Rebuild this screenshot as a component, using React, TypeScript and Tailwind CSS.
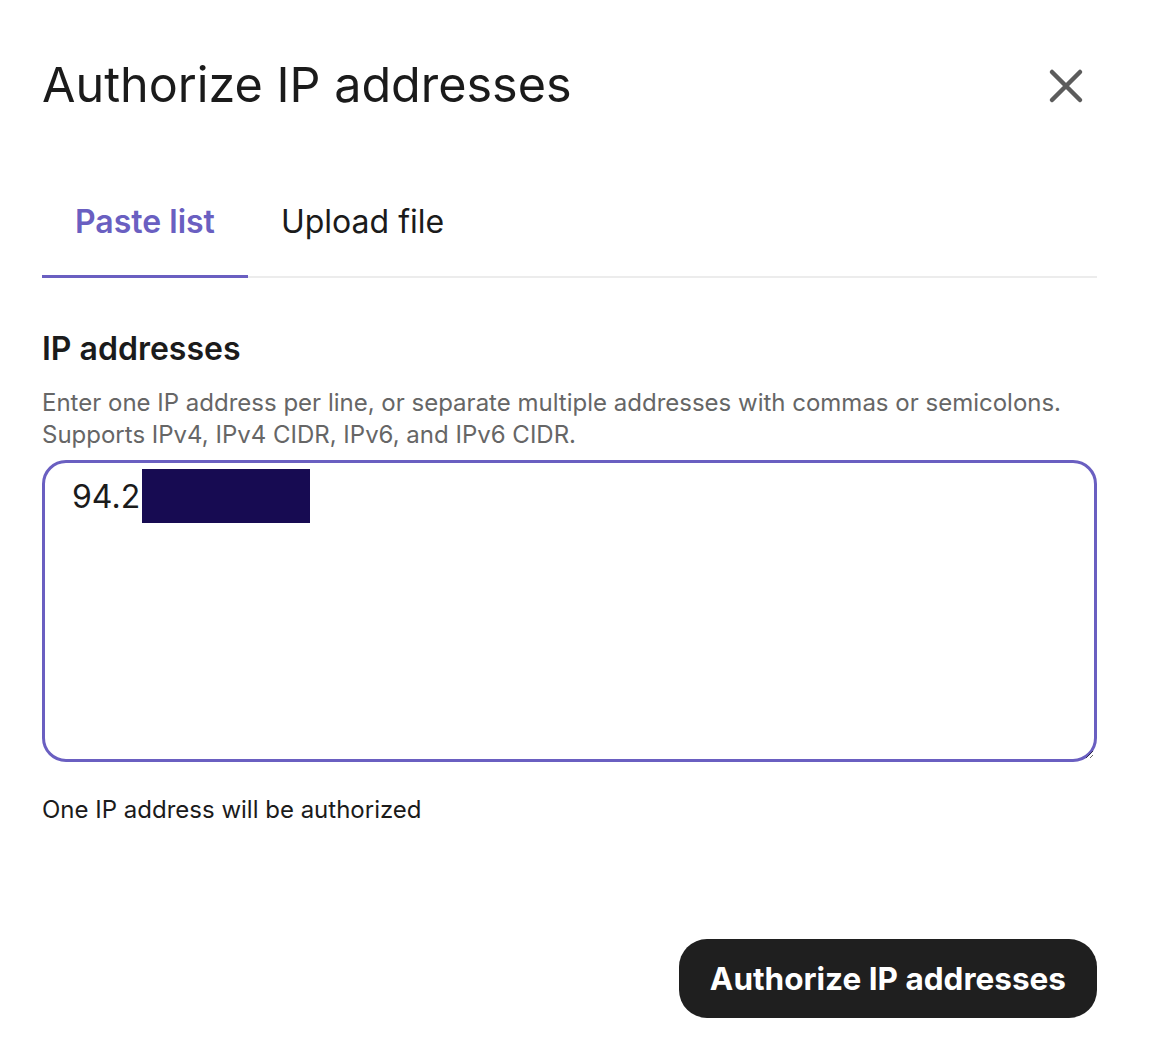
import { useState } from 'react';

type Tab = 'paste' | 'upload';

const TABS: { key: Tab; label: string }[] = [
  { key: 'paste', label: 'Paste list' },
  { key: 'upload', label: 'Upload file' },
];

function CloseIcon() {
  return (
    <svg width="36" height="36" viewBox="0 0 36 36" fill="none" aria-hidden>
      <path d="M4 4 L32 32 M32 4 L4 32" stroke="#5c5c5c" strokeWidth="4.5" strokeLinecap="round" />
    </svg>
  );
}

export default function App() {
  const [tab, setTab] = useState<Tab>('paste');
  const [value, setValue] = useState('94.2');

  return (
    <div
      className="min-h-screen bg-white pl-[42px] pr-[58px] pt-[61px] text-[#1b1b1b]"
      style={{ fontFamily: 'Inter, "Noto Sans", sans-serif' }}
    >
      <header className="flex items-start justify-between">
        <h1 className="text-[48.5px] font-normal leading-[48px]">Authorize IP addresses</h1>
        <button className="mr-[13px] mt-[7px]" aria-label="Close">
          <CloseIcon />
        </button>
      </header>

      <nav className="mt-[94px] flex border-b-2 border-[#ececec]">
        {TABS.map((t) => (
          <button
            key={t.key}
            onClick={() => setTab(t.key)}
            className={`-mb-[2px] border-b-[3px] px-[33px] pb-[34px] text-[32px] leading-[38px] ${
              tab === t.key
                ? 'border-[#6a5fc1] font-semibold text-[#6a5fc1]'
                : 'border-transparent font-normal text-[#1b1b1b]'
            }`}
          >
            {t.label}
          </button>
        ))}
      </nav>

      <section className="mt-[52px]">
        <h2 className="text-[32px] font-semibold leading-[38px]">IP addresses</h2>
        <p className="mt-[19px] text-[24px] leading-[32px] text-[#666666]">
          Enter one IP address per line, or separate multiple addresses with commas or semicolons.
          <br />
          Supports IPv4, IPv4 CIDR, IPv6, and IPv6 CIDR.
        </p>

        <div className="relative mt-[9px]">
          <textarea
            value={value}
            onChange={(e) => setValue(e.target.value)}
            className="block h-[302px] w-full resize-y rounded-[24px] border-[3px] border-[#6a5fc1] px-[27px] pt-[15px] text-[32px] leading-[38px] text-[#1b1b1b] outline-none"
          />
          <div className="absolute left-[100px] top-[9px] h-[54px] w-[168px] bg-[#170b52]" />
        </div>

        <p className="mt-[32px] text-[24px] leading-[32px] text-[#1b1b1b]">One IP address will be authorized</p>
      </section>

      <div className="mt-[113px] flex justify-end">
        <button className="h-[79px] rounded-[28px] bg-[#1f1f1f] px-[31px] text-[31.5px] font-bold text-white">
          Authorize IP addresses
        </button>
      </div>
    </div>
  );
}
